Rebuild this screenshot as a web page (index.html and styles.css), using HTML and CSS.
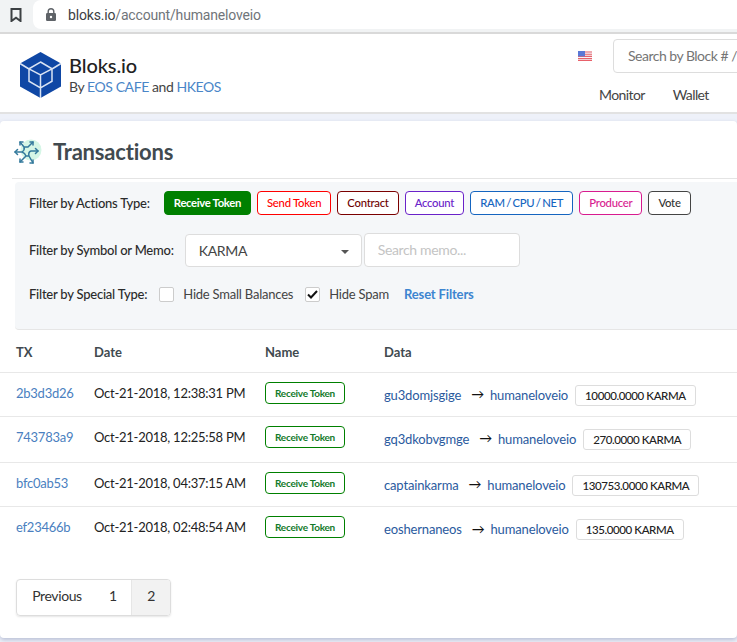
FILE: index.html
```html
<!DOCTYPE html>
<html lang="en">
<head>
<meta charset="utf-8">
<title>Bloks.io</title>
<link rel="stylesheet" href="styles.css">
</head>
<body>
<div class="browser">
  <svg class="bookmark" width="12" height="14" viewBox="0 0 12 14"><path d="M1.500 1h9v12L6 9.700 1.500 13z" fill="none" stroke="#3c4043" stroke-width="2"/></svg>
  <div class="url">
    <svg class="lock" width="10" height="13" viewBox="0 0 10 13"><path d="M2.200 5.500V3.600a2.800 2.800 0 0 1 5.600 0v1.900" fill="none" stroke="#5f6368" stroke-width="1.400"/><rect y="5" width="10" height="8" rx="1.200" fill="#5f6368"/><circle cx="5" cy="9" r="1.200" fill="#fff"/></svg>
    <span class="url-text"><span class="url-host">bloks.io</span>/account/humaneloveio</span>
  </div>
</div>
<header class="site-header">
  <div class="brand">
    <svg class="logo" width="42" height="46" viewBox="0 0 42 46"><path d="M20.500 0 41 11.500v23L20.500 46 0 34.500v-23z" fill="#0f47a5"/><path d="M0 11.500 9 17M41 11.500 32 17M20.500 23v23M20.500 10 32 16.800v12.400L20.500 36 9 29.200V16.800zM9 16.800 20.500 23 32 16.800" fill="none" stroke="#d9e3f3" stroke-width="1.500"/></svg>
    <div>
      <div class="brand-name">Bloks.io</div>
      <div class="brand-by">By <a>EOS CAFE</a> and <a>HKEOS</a></div>
    </div>
  </div>
  <div class="header-right">
    <div class="header-top">
      <svg class="flag" width="14" height="10" viewBox="0 0 14 10"><rect width="14" height="10" fill="#f4f4f8"/><path d="M0 1h14M0 3.200h14M0 5.400h14M0 7.600h14M0 9.500h14" stroke="#e8616a" stroke-width="1.100"/><rect width="7" height="5.400" fill="#5a78d6"/></svg>
      <div class="block-search">Search by Block # /</div>
    </div>
    <nav class="nav"><span>Monitor</span><span>Wallet</span></nav>
  </div>
</header>
<main class="card">
  <div class="title-row">
    <svg class="tx-icon" width="28" height="28" viewBox="0 0 28 28">
      <circle cx="17" cy="12" r="10.500" fill="#d5f6e6"/>
      <g fill="none" stroke="#33799c" stroke-width="1.500" stroke-linecap="round" stroke-linejoin="round">
        <path d="M6 4 10 9Q11 12 8 14H1M19 4 14 9H10M8 14Q11 15 12 18L6 24M12 18H15L19 25M15 18Q14 14 17 13H24"/>
        <path d="M6 7V4H9M16 4H19V7M3.500 11.500 1 14 3.500 16.500M21.500 10.500 24 13 21.500 15.500M6 21V24H9M16 25H19V22"/>
      </g>
    </svg>
    <h1>Transactions</h1>
  </div>
  <section class="filters">
    <div class="filter-row actions">
      <span class="filter-label">Filter by Actions Type:</span>
      <div class="tags">
        <span class="tag tag-on">Receive Token</span>
        <span class="tag t-red">Send Token</span>
        <span class="tag t-maroon">Contract</span>
        <span class="tag t-purple">Account</span>
        <span class="tag t-blue">RAM / CPU / NET</span>
        <span class="tag t-pink">Producer</span>
        <span class="tag t-dark">Vote</span>
      </div>
    </div>
    <div class="filter-row symbol">
      <span class="filter-label">Filter by Symbol or Memo:</span>
      <div class="select">KARMA<i class="caret"></i></div>
      <div class="memo">Search memo...</div>
    </div>
    <div class="filter-row special">
      <span class="filter-label">Filter by Special Type:</span>
      <span class="check"></span><span class="check-label">Hide Small Balances</span>
      <span class="check">
        <svg width="11" height="9" viewBox="0 0 11 9"><path d="M1 4.500 4 7.500 10 1" fill="none" stroke="#111" stroke-width="2"/></svg>
      </span><span class="check-label">Hide Spam</span>
      <a class="reset">Reset Filters</a>
    </div>
  </section>
  <table class="tx-table">
    <thead><tr><th class="c-tx">TX</th><th class="c-date">Date</th><th class="c-name">Name</th><th>Data</th></tr></thead>
    <tbody>
      <tr><td><a>2b3d3d26</a></td><td>Oct-21-2018, 12:38:31 PM</td><td><span class="rt">Receive Token</span></td><td><a class="acct">gu3domjsgige</a><span class="arrow">→</span><a class="acct">humaneloveio</a><span class="amount">10000.0000 KARMA</span></td></tr>
      <tr class="tall-b"><td><a>743783a9</a></td><td>Oct-21-2018, 12:25:58 PM</td><td><span class="rt">Receive Token</span></td><td><a class="acct">gq3dkobvgmge</a><span class="arrow">→</span><a class="acct">humaneloveio</a><span class="amount">270.0000 KARMA</span></td></tr>
      <tr><td><a>bfc0ab53</a></td><td>Oct-21-2018, 04:37:15 AM</td><td><span class="rt">Receive Token</span></td><td><a class="acct">captainkarma</a><span class="arrow">→</span><a class="acct">humaneloveio</a><span class="amount">130753.0000 KARMA</span></td></tr>
      <tr><td><a>ef23466b</a></td><td>Oct-21-2018, 02:48:54 AM</td><td><span class="rt">Receive Token</span></td><td><a class="acct">eoshernaneos</a><span class="arrow">→</span><a class="acct">humaneloveio</a><span class="amount">135.0000 KARMA</span></td></tr>
    </tbody>
  </table>
  <div class="pager"><span class="pg-prev">Previous</span><span class="pg-1">1</span><span class="pg-2">2</span></div>
</main>
</body>
</html>
```
FILE: styles.css
```css
* { box-sizing: border-box; }
html, body { margin: 0; height: 642px; overflow: hidden; }
body { background: #eef1f9; font-family: Lato, "Liberation Sans", sans-serif; color: #222; width: 737px; }
a { color: #4a86c8; }

.browser { height: 34px; background: #f1f3f4; border-bottom: 2px solid #d9d9d9; display: flex; align-items: flex-start; padding-left: 10px; }
.bookmark { margin-top: 8px; flex: none; }
.url { margin-left: 11px; height: 29px; width: 704px; background: #fff; border-radius: 8px 0 0 8px; display: flex; align-items: center; padding-left: 13px; }
.url-text { margin-left: 12px; font-family: Roboto, sans-serif; font-size: 14px; color: #70757a; letter-spacing: -.17px; }
.url-host { color: #3c4043; }

.site-header { height: 80px; background: #fff; border-bottom: 2px solid #e2e2e2; display: flex; }
.brand { display: flex; flex: none; width: 578px; margin: 18px 0 0 0; padding-left: 20px; gap: 7px; white-space: nowrap; }
.logo { flex: none; }
.brand-name { font-size: 20px; line-height: 24px; font-weight: 500; color: #222; margin-top: 1px; letter-spacing: -.1px; }
.brand-by { margin-top: 1px; font-size: 14px; line-height: 18px; color: #444; letter-spacing: -.42px; }
.header-right { flex: none; width: 159px; }
.header-top { display: flex; margin-top: 5px; align-items: center; }
.flag { flex: none; }
.block-search { flex: none; margin-left: 21px; width: 140px; height: 34px; border: 1px solid #ddd; border-radius: 4px; background: #fff; padding-left: 14px; font-size: 14px; line-height: 32px; color: #757575; white-space: nowrap; letter-spacing: -.5px; }
.nav { display: flex; gap: 28px; margin: 13px 0 0 21px; font-size: 14px; line-height: 18px; color: #444; letter-spacing: -.6px; }

.card { margin-top: 7px; height: 517px; background: #fff; border-radius: 4px; box-shadow: 0 2px 4px rgba(120,130,170,.45); padding-top: 1px; }
.title-row { height: 57px; margin-left: 12px; border-bottom: 1px solid #e4e4e4; display: flex; align-items: flex-start; }
.tx-icon { margin: 16px 0 0 2px; flex: none; }
h1 { margin: 16px 0 0 11px; font-size: 22px; line-height: 28px; font-weight: 700; color: #414a4f; letter-spacing: -.2px; }

.filters { margin: 3px 0 0 15px; height: 148px; background: #f5f7f9; border-radius: 4px 0 0 4px; border-bottom: 1px solid #e6e6e6; padding-left: 14px; }
.filter-row { display: flex; align-items: center; white-space: nowrap; }
.filter-label { font-size: 13px; font-weight: 500; color: #2b2b2b; letter-spacing: -.23px; }
.actions { padding-top: 9px; height: 33px; }
.tags { display: flex; gap: 6px; margin-left: 14px; }
.tag { height: 24px; padding: 0 9px; border: 1px solid; border-radius: 4px; background: #fff; font-size: 11.300px; font-weight: 500; line-height: 22px; letter-spacing: -.25px; }
.tag-on { background: #008000; border-color: #008000; color: #fff; font-weight: 700; letter-spacing: -.33px; }
.t-red { color: #f00; border-color: #f00; }
.t-maroon { color: #6d0000; border-color: #7b0000; }
.t-purple { color: #6a22c9; border-color: #6a22c9; }
.t-blue { color: #1565c0; border-color: #1565c0; word-spacing: -1.200px; }
.t-pink { color: #d81b8f; border-color: #d81b8f; }
.t-dark { color: #333; border-color: #444; }

.symbol { margin-top: 18px; height: 34px; }
.select { margin-left: 11px; width: 177px; height: 33px; border: 1px solid #ddd; border-radius: 4px; background: #fff; padding-left: 13px; font-size: 14px; line-height: 31px; color: #444; position: relative; letter-spacing: -.3px; }
.caret { position: absolute; right: 12px; top: 15px; border: 4px solid transparent; border-top-color: #555; border-bottom: 0; }
.memo { margin-left: 2px; width: 156px; height: 34px; border: 1px solid #ddd; border-radius: 4px; background: #fff; padding-left: 13px; font-size: 14px; line-height: 32px; color: #c4c4c4; letter-spacing: -.35px; }

.special { margin-top: 17px; height: 20px; }
.check { margin-left: 12px; width: 15px; height: 15px; border: 1px solid #ccc; border-radius: 2px; background: #fff; display: flex; align-items: center; justify-content: center; flex: none; }
.check-label { margin-left: 9px; font-size: 13px; color: #444; letter-spacing: -.22px; }
.check-label + .check { margin-left: 12px; }
.reset { margin-left: 15px; font-size: 13px; font-weight: 700; color: #3d85d0; letter-spacing: -.15px; }

.tx-table { border-collapse: collapse; width: 737px; table-layout: fixed; font-size: 13px; }
.tx-table th { height: 42px; padding: 3px 0 0 0; text-align: left; font-weight: 700; font-size: 13px; color: #414a4f; border-bottom: 1px solid #e8e8e8; }
.tx-table td { height: 44px; padding: 0 0 2px; border-bottom: 1px solid #e8e8e8; white-space: nowrap; font-size: 13px; letter-spacing: -.25px; color: #222; }
.tx-table tr.tall-b td { height: 46px; padding-bottom: 4px; }
.tx-table td:last-child { padding: 4px 0 0; }
.tx-table tr.tall-b td:last-child { padding: 2px 0 0; }
.tx-table tbody tr:last-child td { border-bottom: 0; }
.tx-table th:first-child, .tx-table td:first-child { padding-left: 16px; }
.c-tx { width: 94px; }
.c-date { width: 171px; }
.c-name { width: 119px; }
.tx-table td:first-child a { color: #4a7fc0; }
.rt { display: inline-block; height: 22px; width: 80px; border: 1px solid #008000; border-radius: 4px; font-size: 10px; letter-spacing: -.25px; font-weight: 700; line-height: 20px; text-align: center; color: #137a2a; }
.acct { color: #2a5a9e; font-size: 13px; letter-spacing: -.15px; }
.arrow { margin: 0 6px 0 10px; color: #111; font-size: 13px; }
.amount { display: inline-block; margin: 0 0 2px 7px; height: 21px; padding: 0 9px; border: 1px solid #ddd; border-radius: 3px; font-size: 11.500px; font-weight: 500; line-height: 19px; letter-spacing: -.4px; color: #222; vertical-align: middle; }

.pager { margin: 29px 0 0 16px; display: inline-flex; height: 37px; border: 1px solid #ddd; border-radius: 4px; box-shadow: 0 1px 2px rgba(0,0,0,.1); font-size: 14px; line-height: 32px; color: #333; overflow: hidden; letter-spacing: -.4px; }
.pg-prev { width: 80px; text-align: center; }
.pg-1 { width: 34px; padding-left: 12px; text-align: left; }
.pg-2 { width: 39px; text-align: center; background: #f2f2f2; border-left: 1px solid #e6e6e6; }
```
